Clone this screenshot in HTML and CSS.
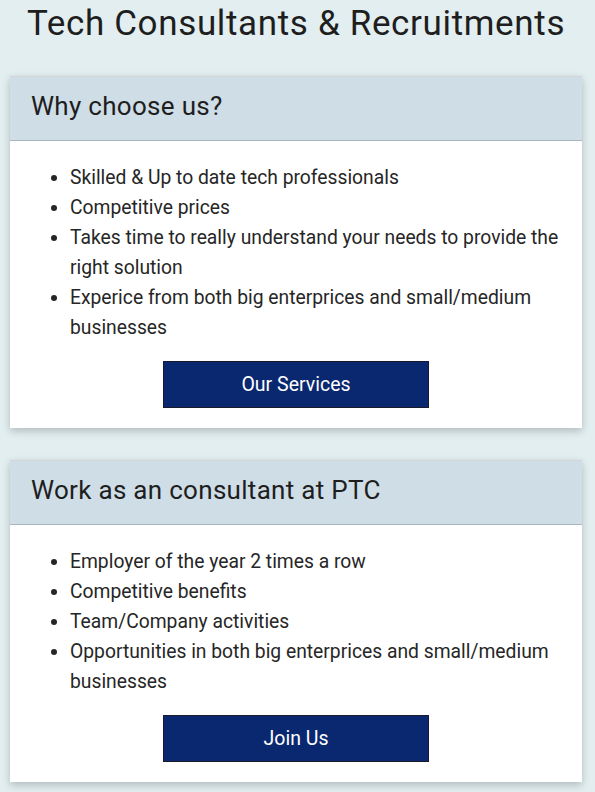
FILE: index.html
```html
<!DOCTYPE html>
<html lang="en">
<head>
<meta charset="utf-8">
<title>Tech Consultants &amp; Recruitments</title>
<link rel="stylesheet" href="styles.css">
</head>
<body>
<main class="page">
  <h1 class="title">Tech Consultants &amp; Recruitments</h1>

  <section class="card">
    <header class="card-head"><h2>Why choose us?</h2></header>
    <div class="card-body">
      <ul class="points">
        <li>Skilled &amp; Up to date tech professionals</li>
        <li>Competitive prices</li>
        <li>Takes time to really understand your needs to provide the right solution</li>
        <li>Experice from both big enterprices and small/medium businesses</li>
      </ul>
      <a class="btn" href="#">Our Services</a>
    </div>
  </section>

  <section class="card">
    <header class="card-head"><h2>Work as an consultant at PTC</h2></header>
    <div class="card-body">
      <ul class="points">
        <li>Employer of the year 2 times a row</li>
        <li>Competitive benefits</li>
        <li>Team/Company activities</li>
        <li>Opportunities in both big enterprices and small/medium businesses</li>
      </ul>
      <a class="btn" href="#">Join Us</a>
    </div>
  </section>
</main>
</body>
</html>
```

FILE: styles.css
```css
html, body {
  margin: 0;
  padding: 0;
}
body {
  background: #e2eef0;
  font-family: Roboto, "Liberation Sans", sans-serif;
  color: #222;
}
.page {
  display: flex;
  flex-direction: column;
  width: 572px;
  margin-left: 10px;
}
.title {
  margin: 0;
  height: 76px;
  padding-top: 4px;
  box-sizing: border-box;
  text-align: center;
  font-size: 35px;
  font-weight: 400;
  line-height: 40px;
  color: #1e1e1e;
  letter-spacing: 0.65px;
  white-space: nowrap;
}
.card {
  background: #fff;
  box-shadow: 0 3px 8px rgba(0, 0, 0, 0.22);
  margin-bottom: 32px;
}
.card-head {
  height: 65px;
  box-sizing: border-box;
  background: #cfdde6;
  border-top: 1px solid #d6d4d6;
  border-bottom: 1px solid #a9b6bf;
  display: flex;
  align-items: center;
  padding-left: 21px;
  padding-bottom: 5px;
}
.card-head h2 {
  margin: 0;
  font-size: 26px;
  font-weight: 400;
  color: #1e1e1e;
  letter-spacing: 0.3px;
}
.card-body {
  display: flex;
  flex-direction: column;
  align-items: center;
  padding: 22px 10px 20px 20px;
}
.points {
  align-self: stretch;
  margin: 0 0 18px 0;
  padding-left: 40px;
  font-size: 19.3px;
  line-height: 30px;
  color: #262626;
}
.btn {
  width: 266px;
  height: 47px;
  box-sizing: border-box;
  background: #0a2870;
  border: 1px solid #1a1a2a;
  color: #fff;
  text-decoration: none;
  font-size: 19.5px;
  display: flex;
  align-items: center;
  justify-content: center;
  margin-left: -10px;
}
```
